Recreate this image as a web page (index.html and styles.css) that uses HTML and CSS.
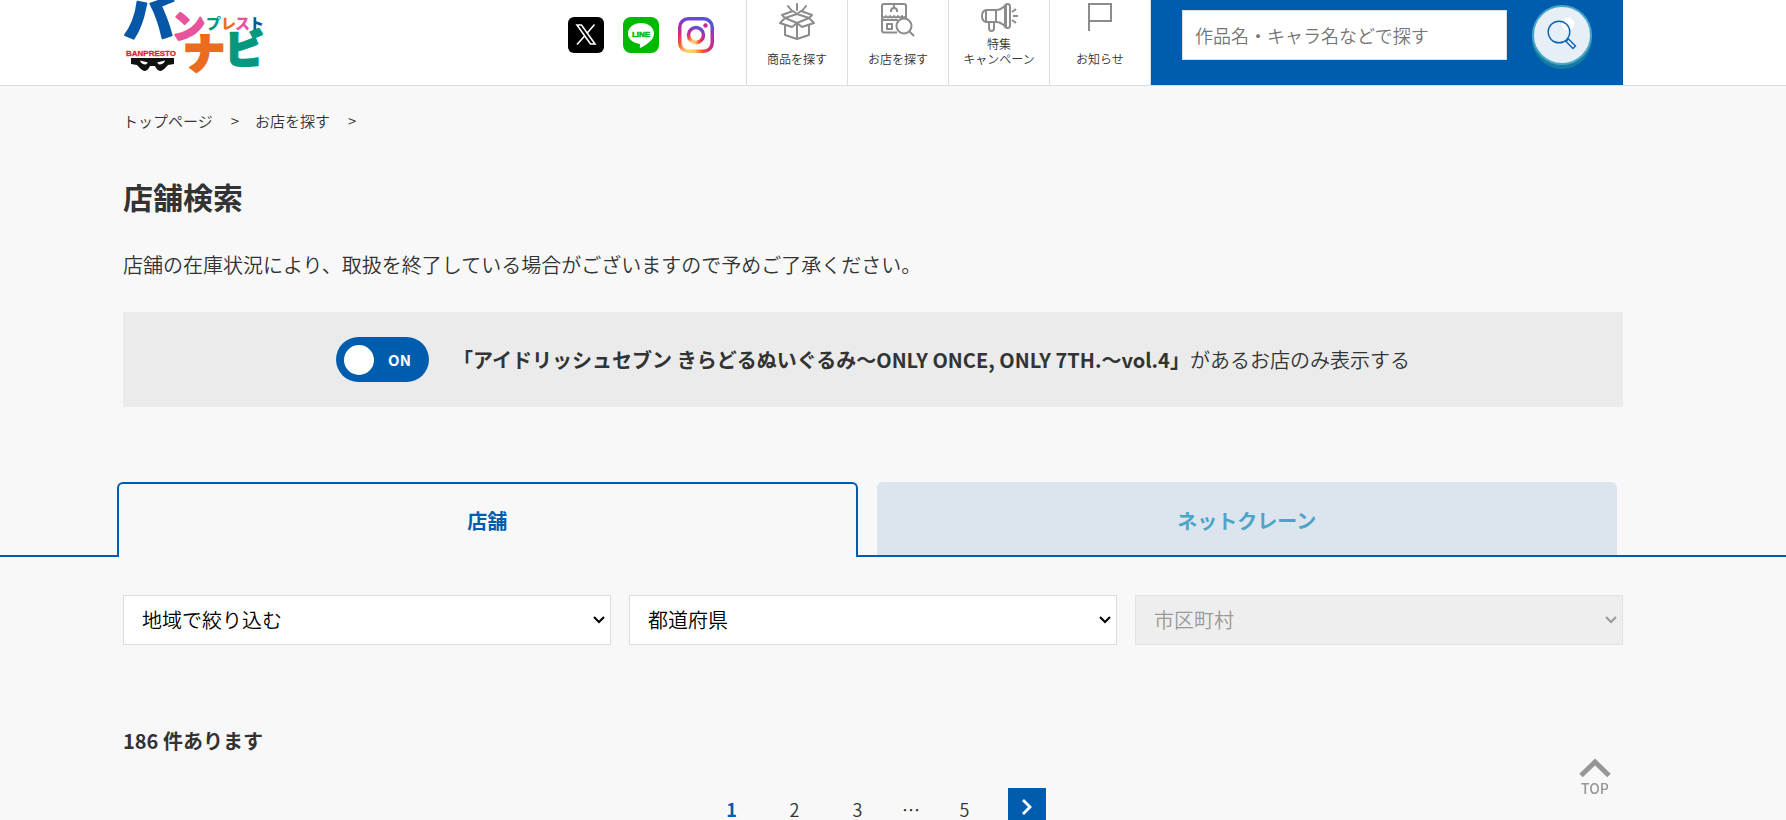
FILE: index.html
```html
<!DOCTYPE html>
<html lang="ja">
<head>
<meta charset="utf-8">
<meta name="viewport" content="width=device-width, initial-scale=1">
<title>店舗検索</title>
<link rel="stylesheet" href="styles.css">
</head>
<body>
<div class="page">
  <header class="header">
    <div class="header-inner">
      <a class="logo" href="#" aria-label="バンプレストナビ">
        <svg width="146" height="76" viewBox="0 0 146 76">
          <g font-family="Noto Sans CJK JP, sans-serif" font-weight="900" stroke-linejoin="round">
            <text x="1" y="37" font-size="50" fill="#0657a8" stroke="#0657a8" stroke-width="2">バ</text>
            <text x="49" y="38" font-size="33" fill="#e8549b" stroke="#e8549b" stroke-width="2">ン</text>
            <g font-size="15">
              <text x="83" y="29" fill="#04997f">プ</text>
              <text x="98" y="29" fill="#ec6c1f">レ</text>
              <text x="112" y="29" fill="#e8549b">ス</text>
              <text x="126" y="29" fill="#0657a8">ト</text>
            </g>
            <text x="60" y="69" font-size="42" fill="#ec6c1f" stroke="#ec6c1f" stroke-width="2">ナ</text>
            <text x="102" y="63" font-size="39" fill="#04997f" stroke="#04997f" stroke-width="2">ビ</text>
          </g>
          <text x="3" y="56" font-family="Liberation Sans, sans-serif" font-weight="700" font-size="8" fill="#e61f26" stroke="#e61f26" stroke-width=".3">BANPRESTO</text>
          <path fill="#111" fill-rule="evenodd" d="M8 58h43v6l-6 1q-3 4-7 6-4 0-6-5h-5q-2 5-6 5-4-2-7-6l-6-1zM17 60.500q1 4 6 4l2-2zM42 60.500q-1 4-6 4l-2-2z"/>
        </svg>
      </a>
      <div class="social">
        <a href="#" aria-label="X"><svg width="36" height="36" viewBox="0 0 36 36"><rect width="36" height="36" rx="6"/><g fill="none" stroke="#fff" stroke-width="1.6"><path d="M9 8h4.500L27 27h-4.500z"/><path d="M26.500 7.500 19 16.200M16.600 19 9 27.500"/></g></svg></a>
        <a href="#" aria-label="LINE"><svg width="36" height="36" viewBox="0 0 36 36"><rect width="36" height="36" rx="8" fill="#00b900"/><path fill="#fff" d="M18 6C10.800 6 5 10.600 5 16.500c0 5.200 4.600 9.400 10.900 10.300 1.400.3 1.300.9.900 3.200-.1.700.1 1 .9.700C21 29 31 24 31 16.500 31 10.600 25.200 6 18 6z"/><text x="18" y="20" text-anchor="middle" font-family="Liberation Sans, sans-serif" font-size="8" font-weight="700" fill="#00b900" stroke="#00b900" stroke-width=".5">LINE</text></svg></a>
        <a href="#" aria-label="Instagram"><svg width="36" height="36" viewBox="0 0 36 36"><defs><radialGradient id="ig" cx=".3" cy="1.05" r="1.1"><stop offset="0" stop-color="#ffd76d"/><stop offset=".15" stop-color="#fdc468"/><stop offset=".38" stop-color="#f5532f"/><stop offset=".62" stop-color="#d12a86"/><stop offset=".85" stop-color="#a033b4"/><stop offset="1" stop-color="#5851db"/></radialGradient></defs><g fill="none" stroke="url(#ig)" stroke-width="3.500"><rect x="1.750" y="1.750" width="32.500" height="32.500" rx="8.500"/><circle cx="18" cy="18" r="7.500"/></g><circle cx="27.500" cy="8.500" r="2.200" fill="#c72b8f"/></svg></a>
      </div>
      <nav class="nav">
        <a href="#"><svg width="36" height="38" viewBox="0 0 36 38"><g fill="none" stroke="#8c8c8c" stroke-width="2" stroke-linejoin="round" stroke-linecap="round"><path d="M9 3l4 5M18 1v6M27 3l-4 5M6 15l12-4 12 4-12 5zM6 15l-5 5 12 4 5-4M30 15l5 5-12 4-5-4M6 15l-3-3 11-4 4 3M30 15l3-3-11-4-4 3M6 23v9l12 4 12-4v-9M18 20v16"/></g></svg><span>商品を探す</span></a>
        <a href="#"><svg width="36" height="38" viewBox="0 0 36 38"><g fill="none" stroke="#8c8c8c" stroke-width="2" stroke-linejoin="round"><path d="M17 29.500H4q-2 0-2-2V3q0-2 2-2h20q2 0 2 2v13M2 13q2 3 4 0 2 3 4 0 2 3 4 0 2 3 4 0 2 3 4 0 2 3 4 0M2 17h16M14 1v4M11 9V8q0-3 3-3t3 3v1"/><path d="M7 21h5v5H7z"/><circle cx="24" cy="23" r="7.500"/><path d="M29 28l5 5"/></g></svg><span>お店を探す</span></a>
        <a href="#"><svg width="38" height="30" viewBox="0 0 38 30"><g fill="none" stroke="#8c8c8c" stroke-width="2" stroke-linejoin="round"><path d="M16 7H6q-4 1-4 6t4 6h10zM6 7v12M16 7q5 0 10-5v22q-5-5-10-5"/><rect x="25" y="1" width="5" height="24" rx="2.500"/><path d="M9 19v6q0 3 2.500 3t2.500-3v-6M32 9l4-3M33 13h5M32 17l4 3"/></g></svg><span>特集<br>キャンペーン</span></a>
        <a href="#"><svg width="26" height="30" viewBox="0 0 26 30"><path d="M2 28V1h22v17H2" fill="none" stroke="#8c8c8c" stroke-width="2"/></svg><span>お知らせ</span></a>
      </nav>
      <form class="search">
        <input type="text" placeholder="作品名・キャラ名などで探す" aria-label="作品名・キャラ名などで探す">
        <button type="button" aria-label="検索"><svg width="56" height="56" viewBox="0 0 56 56"><circle cx="34" cy="17" r="6.500" fill="#fff"/><g fill="none" stroke="#0b62b4" stroke-width="1.400"><circle cx="25" cy="25" r="10.800"/><path d="M32 34.500l2.500-2.500 7 7-2.500 2.500z"/></g></svg></button>
      </form>
    </div>
  </header>
  <main>
    <div class="wrap">
      <nav class="crumbs"><a href="#">トップページ</a><span>&gt;</span><a href="#">お店を探す</a><span>&gt;</span></nav>
      <h1>店舗検索</h1>
      <p class="note">店舗の在庫状況により、取扱を終了している場合がございますので予めご了承ください。</p>
      <label class="filter">
        <input class="switch-input" type="checkbox" checked>
        <span class="switch"><span>ON</span></span>
        <span><b>「アイドリッシュセブン きらどるぬいぐるみ～ONLY ONCE, ONLY 7TH.～vol.4」</b>があるお店のみ表示する</span>
      </label>
    </div>
    <div class="tabs">
      <button class="tab active" type="button">店舗</button>
      <button class="tab" type="button">ネットクレーン</button>
    </div>
    <div class="wrap">
      <div class="selects">
        <select aria-label="地域"><option>地域で絞り込む</option></select>
        <select aria-label="都道府県"><option>都道府県</option></select>
        <select aria-label="市区町村" disabled><option>市区町村</option></select>
      </div>
      <p class="count">186 件あります</p>
      <nav class="pager">
        <a class="current" href="#">1</a><a href="#">2</a><a href="#">3</a><span>…</span><a href="#">5</a>
        <a class="next" href="#" aria-label="次へ"><svg width="12" height="18" viewBox="0 0 12 18"><path d="M2 2l7 7-7 7" fill="none" stroke="#fff" stroke-width="2.800"/></svg></a>
      </nav>
    </div>
  </main>
  <a class="to-top" href="#"><svg width="32" height="20" viewBox="0 0 32 20"><path d="M2 17.500 16 4l14 13.500" fill="none" stroke="#969696" stroke-width="5"/></svg><span>TOP</span></a>
</div>
</body>
</html>
```
FILE: styles.css
```css
* { box-sizing: border-box; }

body {
  margin: 0;
  background: #f8f8f8;
  color: #333;
  font: 350 20px/30px "Noto Sans CJK JP", sans-serif;
}

a { color: inherit; text-decoration: none; }
h1, p { margin: 0; }
b { font-weight: 700; }
svg { display: block; }
button, input, select { font: inherit; }

.page { height: 100vh; overflow: hidden; }

.header {
  background: #fff;
  border-bottom: 1px solid #ddd;
}

.header-inner {
  display: flex;
  height: 85px;
  padding: 0 163px 0 123px;
}

.social {
  display: flex;
  gap: 19px;
  margin: 17px 32px 0 auto;
}

.nav {
  display: flex;
  border-right: 1px solid #ddd;
}

.nav a {
  display: flex;
  flex-direction: column;
  align-items: center;
  justify-content: space-between;
  width: 101px;
  padding: 3px 0 19px;
  border-left: 1px solid #ddd;
  font-size: 12px;
  line-height: 15px;
  text-align: center;
}

.search {
  display: flex;
  align-items: flex-start;
  gap: 25px;
  width: 472px;
  padding: 5px 31px 0;
  background: #005dae;
}

.search input {
  flex: 1;
  min-width: 0;
  height: 50px;
  margin-top: 5px;
  padding: 0 12px;
  border: 1px solid #ddd;
  border-radius: 0;
  font-size: 18px;
}

.search input::placeholder { color: #757575; }

.search button {
  width: 60px;
  height: 60px;
  padding: 0;
  border: 2px solid #49a6cb;
  border-radius: 50%;
  background: #e6eff6;
  box-shadow: 0 4px 0 #147ba0;
}

.wrap { padding: 0 163px 0 123px; }

.crumbs {
  display: flex;
  padding-top: 24px;
  font-size: 15px;
  line-height: 22px;
}

.crumbs span { padding: 0 16px 0 18px; }

h1 {
  margin-top: 42px;
  font-size: 30px;
  line-height: 45px;
}

.note { margin-top: 31px; }

.filter {
  display: flex;
  align-items: center;
  justify-content: center;
  gap: 24px;
  height: 95px;
  margin-top: 32px;
  background: #ebebeb;
}

.switch-input {
  position: absolute;
  opacity: 0;
}

.switch {
  display: flex;
  align-items: center;
  gap: 14px;
  width: 93px;
  height: 45px;
  padding-left: 8px;
  border-radius: 23px;
  background: #005dae;
  color: #fff;
  font-size: 15px;
  font-weight: 700;
}

.switch::before {
  content: "";
  width: 30px;
  height: 30px;
  border-radius: 50%;
  background: #fff;
}

.tabs {
  display: grid;
  grid-template-columns: 1fr 1fr;
  gap: 19px;
  margin-top: 75px;
  padding: 0 169px 0 117px;
  border-bottom: 2px solid #005dae;
}

.tab {
  height: 73px;
  padding: 4px 0 0;
  border: 0;
  border-radius: 6px 6px 0 0;
  background: #dce4ed;
  color: #4ba5c8;
  font-weight: 700;
}

.tab.active {
  height: 75px;
  margin-bottom: -2px;
  padding: 0;
  border: 2px solid #005dae;
  border-bottom: 0;
  background: #f8f8f8;
  color: #005dae;
}

.selects {
  display: grid;
  grid-template-columns: repeat(3, 1fr);
  gap: 18px;
  margin-top: 38px;
}

select {
  appearance: none;
  height: 50px;
  padding: 0 18px;
  border: 1px solid #ddd;
  border-radius: 0;
  background: #fff url("data:image/svg+xml,%3Csvg xmlns='http://www.w3.org/2000/svg' width='12' height='8'%3E%3Cpath d='M1 1l5 5 5-5' fill='none' stroke='%23000' stroke-width='2'/%3E%3C/svg%3E") no-repeat right 5px center;
  color: #000;
}

select:disabled {
  border-color: #e3e3e3;
  background-color: #eee;
  background-image: url("data:image/svg+xml,%3Csvg xmlns='http://www.w3.org/2000/svg' width='12' height='8'%3E%3Cpath d='M1 1l5 5 5-5' fill='none' stroke='%23999' stroke-width='2'/%3E%3C/svg%3E");
  color: #999;
  opacity: 1;
}

.count {
  margin-top: 81px;
  font-weight: 700;
}

.pager {
  display: flex;
  justify-content: center;
  margin-top: 32px;
  font-size: 18px;
  line-height: 42px;
}

.pager a, .pager span {
  width: 63px;
  text-align: center;
}

.pager span { width: 44px; }
.pager .current { color: #005dae; font-weight: 700; }

.pager .next {
  display: flex;
  align-items: center;
  justify-content: center;
  width: 38px;
  height: 38px;
  margin-left: 12px;
  background: #005dae;
}

.to-top {
  position: fixed;
  right: 175px;
  bottom: 22px;
  display: flex;
  flex-direction: column;
  align-items: center;
  color: #969696;
  font-size: 14px;
  font-weight: 500;
  line-height: 20px;
}
```
